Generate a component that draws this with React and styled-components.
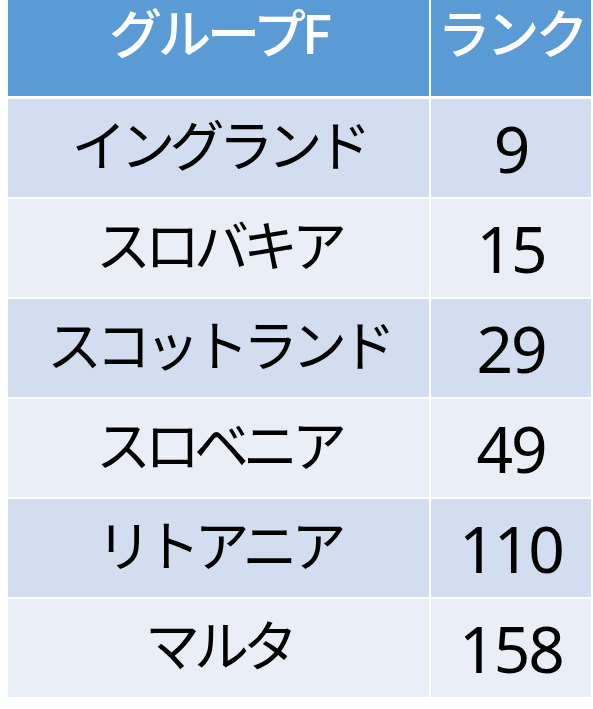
import React from 'react';
import styled, { createGlobalStyle } from 'styled-components';

const rows = [
  { name: 'イングランド', rank: 9 },
  { name: 'スロバキア', rank: 15 },
  { name: 'スコットランド', rank: 29 },
  { name: 'スロベニア', rank: 49 },
  { name: 'リトアニア', rank: 110 },
  { name: 'マルタ', rank: 158 },
];

const App = () => {
  return (
    <>
      <GlobalStyle />
      <Table>
        <HeadCell>グループF</HeadCell>
        <HeadCell>ランク</HeadCell>
        {rows.map((r, i) => (
          <React.Fragment key={r.name}>
            <NameCell $band={i % 2}>{r.name}</NameCell>
            <RankCell $band={i % 2}>{r.rank}</RankCell>
          </React.Fragment>
        ))}
      </Table>
    </>
  );
};

export default App;

const GlobalStyle = createGlobalStyle`
  body {
    margin: 0;
    background: #ffffff;
    font-family: "Noto Sans", "Noto Sans CJK JP", sans-serif;
  }
`;

const Table = styled.div`
  display: grid;
  grid-template-columns: 421px 160px;
  grid-template-rows: 97px repeat(6, 98px);
  column-gap: 2px;
  row-gap: 2px;
  padding-left: 8px;
  width: 583px;

  & > :nth-child(1),
  & > :nth-child(2) {
    margin-bottom: 1px;
  }
`;

const HeadCell = styled.div`
  background: #5b9bd5;
  color: #ffffff;
  font-family: "Noto Sans CJK JP", sans-serif;
  font-size: 53px;
  font-weight: 500;
  letter-spacing: -4px;
  display: flex;
  justify-content: center;
  align-items: flex-start;
  line-height: 62px;
  white-space: nowrap;
`;

const Cell = styled.div`
  background: ${(p) => (p.$band ? '#eaeff7' : '#d2deef')};
  color: #000000;
  display: flex;
  justify-content: center;
  align-items: center;
  white-space: nowrap;
`;

const NameCell = styled(Cell)`
  font-family: "Noto Sans CJK JP", sans-serif;
  font-size: 55px;
  font-weight: 400;
  letter-spacing: -6px;
  line-height: 1.1;
  padding-bottom: 12px;
`;

const RankCell = styled(Cell)`
  font-family: "Noto Sans", sans-serif;
  font-size: 64px;
  letter-spacing: -2px;
`;
